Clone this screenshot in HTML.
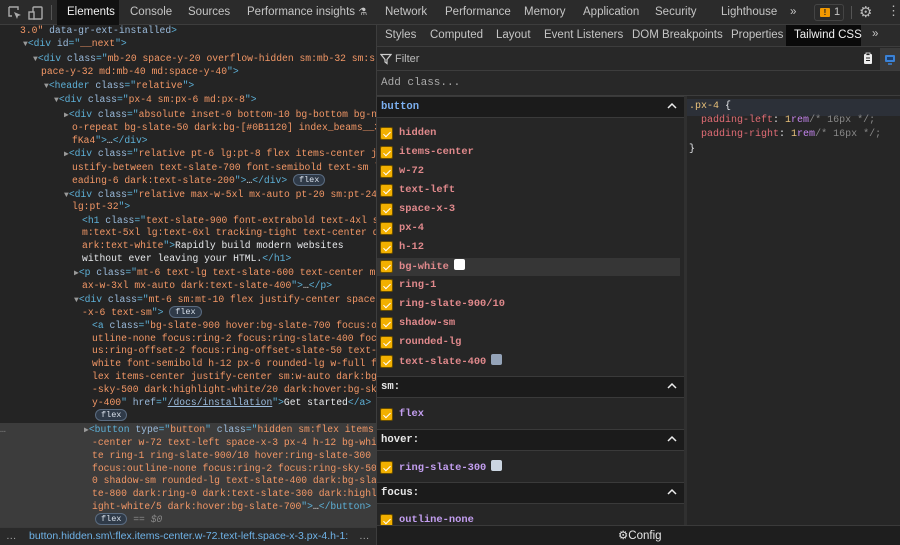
<!DOCTYPE html>
<html><head><meta charset="utf-8"><style>
*{margin:0;padding:0;box-sizing:border-box}
body{width:900px;height:545px;background:#242424;overflow:hidden;position:relative;font-family:"Liberation Sans",sans-serif;color:#e3e3e3}
.a{position:absolute}
.top{left:0;top:0;width:900px;height:25px;background:#2b2b2b;border-bottom:1px solid #3d3d3d}
.t{position:absolute;top:6px;font-size:11.5px;color:#c5c5c5;white-space:nowrap}
.m{font-family:"Liberation Mono",monospace}
.el{left:0;top:26px;width:376px;height:501px;background:#242424}
.ln{position:absolute;font-family:"Liberation Mono",monospace;font-size:9.7px;line-height:14px;white-space:pre;color:#e8eaed}
.g{color:#5db0d7}.n{color:#9bbbdc}.v{color:#f29766}.w{color:#e8eaed}
.tri{color:#9a9a9a;font-size:8px}
.badge{display:inline-block;border:1px solid #5a6b80;background:#2f3a48;color:#d8e0ea;border-radius:8px;padding:0 5px;line-height:10px;font-size:8.5px;vertical-align:1px}
.cb{position:absolute;left:380px;width:13px;height:13px;background:#f2b000;border-radius:2px;border:1px solid #6a4e00}
.cb:after{content:"";position:absolute;left:3.5px;top:1.5px;width:3px;height:6px;border:solid #fff;border-width:0 1.5px 1.5px 0;transform:rotate(45deg)}
.cl{position:absolute;left:399px;font-family:"Liberation Mono",monospace;font-size:10.4px;font-weight:bold;color:#e0898c;line-height:14px}
.pu{color:#c39ef0}
.hd{position:absolute;left:377px;width:307px;height:22px;background:#1b1b1b;border-top:1px solid #3a3a3a;border-bottom:1px solid #3a3a3a}
.hd span{position:absolute;left:4px;top:4px;font-family:"Liberation Mono",monospace;font-size:10.6px;font-weight:bold;color:#e8e8e8}
.car{position:absolute;right:6px;top:3px;width:12px;height:12px}
.sw{display:inline-block;width:11px;height:11px;border-radius:2px;vertical-align:-1px;margin-left:5px}
</style></head><body>
<div class="a top"></div>
<!-- top icons -->
<svg class="a" style="left:7px;top:5px" width="40" height="16" viewBox="0 0 40 16"><path d="M2 2h9v3M2 2v9h3" fill="none" stroke="#aaa" stroke-width="1.4"/><path d="M7 7l7 3-3 1-1 3z" fill="#aaa"/><rect x="26" y="2" width="9" height="12" rx="1" fill="none" stroke="#aaa" stroke-width="1.4"/><rect x="22" y="7" width="5" height="7" fill="#2b2b2b" stroke="#aaa" stroke-width="1.4"/></svg>
<div class="a" style="left:51px;top:5px;width:1px;height:15px;background:#555"></div>
<div class="a" style="left:57px;top:0;width:62px;height:25px;background:#111"></div>
<div class="t" style="left:67px;color:#f0f0f0">Elements</div>
<div class="t" style="left:130px">Console</div>
<div class="t" style="left:188px">Sources</div>
<div class="t" style="left:247px">Performance insights <span style="font-size:10px">⚗</span></div>
<div class="t" style="left:385px">Network</div>
<div class="t" style="left:445px">Performance</div>
<div class="t" style="left:524px">Memory</div>
<div class="t" style="left:583px">Application</div>
<div class="t" style="left:655px">Security</div>
<div class="t" style="left:721px">Lighthouse</div>
<div class="t" style="left:790px">»</div>
<div class="a" style="left:814px;top:4px;width:30px;height:17px;border:1px solid #444;border-radius:3px"></div>
<div class="a" style="left:820px;top:8px;width:10px;height:9px;background:#f29900;border-radius:1px;color:#222;font-size:8px;font-weight:bold;text-align:center;line-height:9px">!</div>
<div class="t" style="left:834px;font-size:11px">1</div>
<div class="a" style="left:851px;top:6px;width:1px;height:13px;background:#555"></div>
<div class="t" style="left:859px;top:3px;font-size:15px;color:#bbb">⚙</div>
<div class="t" style="left:887px;top:3px;font-size:13px;color:#bbb">⋮</div>

<!-- elements panel -->
<div class="a el"></div>
<div class="a" style="left:0;top:423px;width:376px;height:104px;background:#3c3c3c"></div>
<div class="ln" style="left:20px;top:24px"><span class="v">3.0"</span><span class="n"> data-gr-ext-installed</span><span class="g">&gt;</span></div>
<div class="ln" style="left:23px;top:37px"><span class="tri">▼</span><span class="g">&lt;div </span><span class="n">id</span><span class="g">="</span><span class="v">__next</span><span class="g">"&gt;</span></div>
<div class="ln" style="left:33px;top:52px"><span class="tri">▼</span><span class="g">&lt;div </span><span class="n">class</span><span class="g">="</span><span class="v">mb-20 space-y-20 overflow-hidden sm:mb-32 sm:s</span></div>
<div class="ln" style="left:41px;top:65px"><span class="v">pace-y-32 md:mb-40 md:space-y-40</span><span class="g">"&gt;</span></div>
<div class="ln" style="left:44px;top:79px"><span class="tri">▼</span><span class="g">&lt;header </span><span class="n">class</span><span class="g">="</span><span class="v">relative</span><span class="g">"&gt;</span></div>
<div class="ln" style="left:54px;top:93px"><span class="tri">▼</span><span class="g">&lt;div </span><span class="n">class</span><span class="g">="</span><span class="v">px-4 sm:px-6 md:px-8</span><span class="g">"&gt;</span></div>
<div class="ln" style="left:64px;top:108px"><span class="tri">▶</span><span class="g">&lt;div </span><span class="n">class</span><span class="g">="</span><span class="v">absolute inset-0 bottom-10 bg-bottom bg-n</span></div>
<div class="ln" style="left:72px;top:121px"><span class="v">o-repeat bg-slate-50 dark:bg-[#0B1120] index_beams__3</span></div>
<div class="ln" style="left:72px;top:134px"><span class="v">fKa4</span><span class="g">"&gt;</span><span class="w">…</span><span class="g">&lt;/div&gt;</span></div>
<div class="ln" style="left:64px;top:147px"><span class="tri">▶</span><span class="g">&lt;div </span><span class="n">class</span><span class="g">="</span><span class="v">relative pt-6 lg:pt-8 flex items-center j</span></div>
<div class="ln" style="left:72px;top:161px"><span class="v">ustify-between text-slate-700 font-semibold text-sm l</span></div>
<div class="ln" style="left:72px;top:174px"><span class="v">eading-6 dark:text-slate-200</span><span class="g">"&gt;</span><span class="w">…</span><span class="g">&lt;/div&gt;</span> <span class="badge">flex</span></div>
<div class="ln" style="left:64px;top:188px"><span class="tri">▼</span><span class="g">&lt;div </span><span class="n">class</span><span class="g">="</span><span class="v">relative max-w-5xl mx-auto pt-20 sm:pt-24</span></div>
<div class="ln" style="left:72px;top:200px"><span class="v">lg:pt-32</span><span class="g">"&gt;</span></div>
<div class="ln" style="left:82px;top:214px"><span class="g">&lt;h1 </span><span class="n">class</span><span class="g">="</span><span class="v">text-slate-900 font-extrabold text-4xl s</span></div>
<div class="ln" style="left:82px;top:226px"><span class="v">m:text-5xl lg:text-6xl tracking-tight text-center d</span></div>
<div class="ln" style="left:82px;top:239px"><span class="v">ark:text-white</span><span class="g">"&gt;</span><span class="w">Rapidly build modern websites</span></div>
<div class="ln" style="left:82px;top:252px"><span class="w">without ever leaving your HTML.</span><span class="g">&lt;/h1&gt;</span></div>
<div class="ln" style="left:74px;top:266px"><span class="tri">▶</span><span class="g">&lt;p </span><span class="n">class</span><span class="g">="</span><span class="v">mt-6 text-lg text-slate-600 text-center m</span></div>
<div class="ln" style="left:82px;top:279px"><span class="v">ax-w-3xl mx-auto dark:text-slate-400</span><span class="g">"&gt;</span><span class="w">…</span><span class="g">&lt;/p&gt;</span></div>
<div class="ln" style="left:74px;top:293px"><span class="tri">▼</span><span class="g">&lt;div </span><span class="n">class</span><span class="g">="</span><span class="v">mt-6 sm:mt-10 flex justify-center space</span></div>
<div class="ln" style="left:82px;top:306px"><span class="v">-x-6 text-sm</span><span class="g">"&gt;</span> <span class="badge">flex</span></div>
<div class="ln" style="left:92px;top:319px"><span class="g">&lt;a </span><span class="n">class</span><span class="g">="</span><span class="v">bg-slate-900 hover:bg-slate-700 focus:o</span></div>
<div class="ln" style="left:92px;top:332px"><span class="v">utline-none focus:ring-2 focus:ring-slate-400 foc</span></div>
<div class="ln" style="left:92px;top:344px"><span class="v">us:ring-offset-2 focus:ring-offset-slate-50 text-</span></div>
<div class="ln" style="left:92px;top:357px"><span class="v">white font-semibold h-12 px-6 rounded-lg w-full f</span></div>
<div class="ln" style="left:92px;top:370px"><span class="v">lex items-center justify-center sm:w-auto dark:bg</span></div>
<div class="ln" style="left:92px;top:383px"><span class="v">-sky-500 dark:highlight-white/20 dark:hover:bg-sk</span></div>
<div class="ln" style="left:92px;top:396px"><span class="v">y-400</span><span class="g">" </span><span class="n">href</span><span class="g">="</span><span class="n" style="text-decoration:underline">/docs/installation</span><span class="g">"&gt;</span><span class="w">Get started</span><span class="g">&lt;/a&gt;</span></div>
<div class="ln" style="left:95px;top:409px"><span class="badge">flex</span></div>
<div class="ln" style="left:0;top:423px;color:#888">…</div>
<div class="ln" style="left:84px;top:423px"><span class="tri">▶</span><span class="g">&lt;button </span><span class="n">type</span><span class="g">="</span><span class="v">button</span><span class="g">" </span><span class="n">class</span><span class="g">="</span><span class="v">hidden sm:flex items</span></div>
<div class="ln" style="left:92px;top:436px"><span class="v">-center w-72 text-left space-x-3 px-4 h-12 bg-whi</span></div>
<div class="ln" style="left:92px;top:449px"><span class="v">te ring-1 ring-slate-900/10 hover:ring-slate-300</span></div>
<div class="ln" style="left:92px;top:462px"><span class="v">focus:outline-none focus:ring-2 focus:ring-sky-50</span></div>
<div class="ln" style="left:92px;top:474px"><span class="v">0 shadow-sm rounded-lg text-slate-400 dark:bg-sla</span></div>
<div class="ln" style="left:92px;top:487px"><span class="v">te-800 dark:ring-0 dark:text-slate-300 dark:highl</span></div>
<div class="ln" style="left:92px;top:500px"><span class="v">ight-white/5 dark:hover:bg-slate-700</span><span class="g">"&gt;</span><span class="w">…</span><span class="g">&lt;/button&gt;</span></div>
<div class="ln" style="left:95px;top:513px"><span class="badge">flex</span> <span style="color:#888">== <i>$0</i></span></div>
<div class="a" style="left:0;top:527px;width:376px;height:18px;background:#2a2a2a;border-top:1px solid #3a3a3a"></div>
<div class="a" style="left:6px;top:530px;font-size:10.5px;color:#aaa">…</div>
<div class="a" style="left:29px;top:530px;font-size:10.5px;color:#6fb3e8;white-space:nowrap">button.hidden.sm\:flex.items-center.w-72.text-left.space-x-3.px-4.h-1:</div>
<div class="a" style="left:359px;top:530px;font-size:10.5px;color:#aaa">…</div>

<!-- right side -->
<div class="a" style="left:376px;top:25px;width:1px;height:520px;background:#3d3d3d"></div>
<div class="a" style="left:377px;top:25px;width:523px;height:22px;background:#2b2b2b;border-bottom:1px solid #3d3d3d"></div>
<div class="a" style="left:786px;top:25px;width:75px;height:21px;background:#0a0a0a"></div>
<div class="t" style="left:385px;top:29px">Styles</div>
<div class="t" style="left:430px;top:29px">Computed</div>
<div class="t" style="left:496px;top:29px">Layout</div>
<div class="t" style="left:544px;top:29px">Event Listeners</div>
<div class="t" style="left:632px;top:29px">DOM Breakpoints</div>
<div class="t" style="left:731px;top:29px">Properties</div>
<div class="t" style="left:794px;top:29px;color:#f0f0f0">Tailwind CSS</div>
<div class="t" style="left:872px;top:28px">»</div>
<div class="a" style="left:377px;top:47px;width:523px;height:24px;background:#282828;border-bottom:1px solid #3d3d3d"></div>
<svg class="a" style="left:380px;top:53px" width="12" height="12" viewBox="0 0 12 12"><path d="M1 1.5h10L7 6.5v4L5 9V6.5z" fill="none" stroke="#ccc" stroke-width="1.2"/></svg>
<div class="t" style="left:395px;top:53px;font-size:11px;color:#bbb">Filter</div>
<svg class="a" style="left:863px;top:52px" width="10" height="13" viewBox="0 0 10 13"><rect x="1" y="2" width="8" height="10" rx="1" fill="#eee"/><rect x="3" y="1" width="4" height="2.5" fill="#222" stroke="#eee" stroke-width=".8"/><path d="M3 6h4M3 8.5h4" stroke="#222"/></svg>
<div class="a" style="left:880px;top:48px;width:20px;height:22px;background:#3a3a3a"></div>
<svg class="a" style="left:884px;top:54px" width="12" height="11" viewBox="0 0 12 11"><rect x="1" y="1" width="10" height="7" rx="1" fill="#3b82d6"/><rect x="3" y="3" width="6" height="3" fill="#1a3f70"/><path d="M4 10h4" stroke="#3b82d6" stroke-width="1.5"/></svg>
<div class="a" style="left:377px;top:71px;width:523px;height:25px;background:#282828;border-bottom:1px solid #3d3d3d"></div>
<div class="a m" style="left:381px;top:77px;font-size:11px;color:#aaa">Add class...</div>
<div class="a" style="left:377px;top:96px;width:307px;height:431px;background:#262626"></div>
<div class="a" style="left:684px;top:96px;width:3px;height:429px;background:#303030"></div>
<div class="a" style="left:687px;top:96px;width:213px;height:429px;background:#262626"></div>

<div class="hd" style="top:96px"><span style="color:#7cb0f0">button</span><svg class="car" viewBox="0 0 12 12"><path d="M2 8l4-4 4 4" fill="none" stroke="#eee" stroke-width="1.5"/></svg></div>
<div class="a" style="left:377px;top:258px;width:303px;height:18px;background:#363636"></div>
<div class="cb" style="top:127px"></div><div class="cl" style="top:126px">hidden</div>
<div class="cb" style="top:146px"></div><div class="cl" style="top:145px">items-center</div>
<div class="cb" style="top:165px"></div><div class="cl" style="top:164px">w-72</div>
<div class="cb" style="top:184px"></div><div class="cl" style="top:183px">text-left</div>
<div class="cb" style="top:203px"></div><div class="cl" style="top:202px">space-x-3</div>
<div class="cb" style="top:222px"></div><div class="cl" style="top:221px">px-4</div>
<div class="cb" style="top:241px"></div><div class="cl" style="top:240px">h-12</div>
<div class="cb" style="top:260px"></div><div class="cl" style="top:259px">bg-white<span class="sw" style="background:#fff"></span></div>
<div class="cb" style="top:279px"></div><div class="cl" style="top:278px">ring-1</div>
<div class="cb" style="top:298px"></div><div class="cl" style="top:297px">ring-slate-900/10</div>
<div class="cb" style="top:317px"></div><div class="cl" style="top:316px">shadow-sm</div>
<div class="cb" style="top:336px"></div><div class="cl" style="top:335px">rounded-lg</div>
<div class="cb" style="top:355px"></div><div class="cl" style="top:354px">text-slate-400<span class="sw" style="background:#94a3b8"></span></div>

<div class="hd" style="top:376px"><span>sm:</span><svg class="car" viewBox="0 0 12 12"><path d="M2 8l4-4 4 4" fill="none" stroke="#eee" stroke-width="1.5"/></svg></div>
<div class="cb" style="top:408px"></div><div class="cl pu" style="top:407px">flex</div>
<div class="hd" style="top:429px"><span>hover:</span><svg class="car" viewBox="0 0 12 12"><path d="M2 8l4-4 4 4" fill="none" stroke="#eee" stroke-width="1.5"/></svg></div>
<div class="cb" style="top:461px"></div><div class="cl pu" style="top:460px">ring-slate-300<span class="sw" style="background:#cbd5e1"></span></div>
<div class="hd" style="top:482px"><span>focus:</span><svg class="car" viewBox="0 0 12 12"><path d="M2 8l4-4 4 4" fill="none" stroke="#eee" stroke-width="1.5"/></svg></div>
<div class="cb" style="top:514px"></div><div class="cl pu" style="top:513px">outline-none</div>

<!-- css rule -->
<div class="a" style="left:687px;top:99px;width:213px;height:17px;background:#2c3038"></div>
<div class="ln" style="left:689px;top:100px;font-size:10px"><span style="color:#e8c07a">.px-4</span> {</div>
<div class="ln" style="left:701px;top:114px;font-size:10px"><span style="color:#e06c75">padding-left</span>: <span style="color:#e8c07a">1</span><span style="color:#c586f0">rem</span><span style="color:#888">/* 16px */;</span></div>
<div class="ln" style="left:701px;top:128px;font-size:10px"><span style="color:#e06c75">padding-right</span>: <span style="color:#e8c07a">1</span><span style="color:#c586f0">rem</span><span style="color:#888">/* 16px */;</span></div>
<div class="ln" style="left:689px;top:143px;font-size:10px">}</div>

<!-- config bar -->
<div class="a" style="left:377px;top:525px;width:523px;height:20px;background:#1e1e1e;border-top:1px solid #3a3a3a"></div>
<div class="a" style="left:618px;top:528px;font-size:11.5px;color:#e8e8e8">⚙Config</div>
</body></html>
